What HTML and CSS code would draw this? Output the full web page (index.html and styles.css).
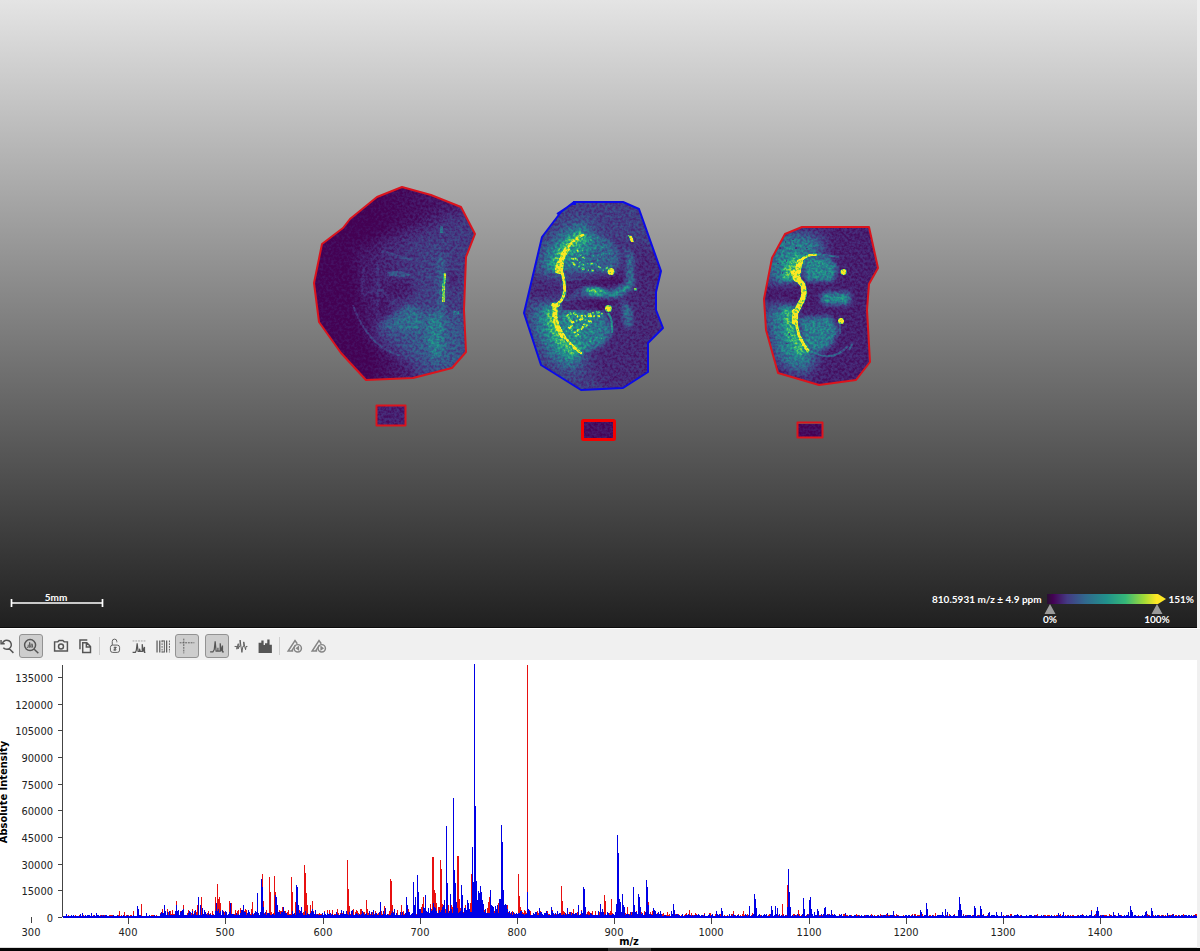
FILE: index.html
```html
<!DOCTYPE html>
<html lang="en">
<head>
<meta charset="utf-8">
<title>Imaging viewer</title>
<link rel="stylesheet" href="styles.css">
</head>
<body>
<main class="app">
<section class="viewport" aria-label="Ion image">
<svg class="scene" viewBox="0 0 1197 627" preserveAspectRatio="xMidYMid meet">
<defs>
<filter id="viridis" x="0" y="0" width="1" height="1" color-interpolation-filters="sRGB">
<feTurbulence type="fractalNoise" baseFrequency="0.38" numOctaves="2" seed="7" result="t"/>
<feColorMatrix in="t" values="2.4 0 0 0 -0.7  2.4 0 0 0 -0.7  2.4 0 0 0 -0.7  0 0 0 0 1" result="n"/>
<feComposite in="SourceGraphic" in2="n" operator="arithmetic" k1="0.55" k2="0.75" k3="0.06" k4="-0.025"/>
<feComponentTransfer>
<feFuncR type="table" tableValues=".267 .278 .231 .173 .129 .157 .369 .678 .992"/>
<feFuncG type="table" tableValues=".004 .176 .322 .447 .569 .682 .788 .863 .906"/>
<feFuncB type="table" tableValues=".329 .482 .545 .557 .549 .502 .384 .188 .145"/>
</feComponentTransfer>
</filter>
<filter id="b1" x="-1" y="-1" width="3" height="3"><feGaussianBlur stdDeviation="0.7"/></filter>
<filter id="b3" x="-1" y="-1" width="3" height="3"><feGaussianBlur stdDeviation="2.5"/></filter>
<filter id="b8" x="-1" y="-1" width="3" height="3"><feGaussianBlur stdDeviation="7"/></filter>
<linearGradient id="fadeR"><stop offset=".35" stop-color="#fff" stop-opacity="0"/><stop offset=".8" stop-color="#fff" stop-opacity=".15"/><stop offset="1" stop-color="#fff" stop-opacity=".15"/></linearGradient>
<clipPath id="c1"><path d="M402 187L431 195 461 207 475 234 466 257 464 310 466 352 452 368 413 378 366 380 341 353 319 322 314 283 322 244 343 228 350 219 377 197Z"/></clipPath>
<clipPath id="c2"><path d="M573 202H623L639 209 661 271 656 292V310L663 328 648 343V372L623 388 581 390 541 365 524 313 542 237 561 212Z"/></clipPath>
<clipPath id="c3"><path d="M802 227H869L878 268 869 284 867 310 870 362 856 380 819 385 778 373 766 330 764 299 772 258 785 234Z"/></clipPath>
</defs>

<g clip-path="url(#c1)"><g filter="url(#viridis)">
<rect x="310" y="183" width="170" height="200" fill="#020202"/>
<rect x="310" y="183" width="170" height="200" fill="url(#fadeR)"/>
<path d="M350 180H470L470 210 420 225 370 240Z" fill="#000" opacity=".6" filter="url(#b8)"/>
<g fill="#fff">
<path d="M355 250Q400 225 440 240V350Q400 370 365 335Z" opacity=".06" filter="url(#b8)"/>
<path d="M372 335L412 305 432 318 466 312V378H425L400 350Z" opacity=".12" filter="url(#b8)"/>
<path d="M375 326L411 303 425 318 420 330 390 330Z" opacity=".13" filter="url(#b3)"/>
<path d="M428 312H444V352L434 362 427 345Z" opacity=".16" filter="url(#b3)"/>
<path d="M438 255H445V312H438Z" opacity=".14" filter="url(#b3)"/>
<path d="M387 272L400 271 411 275 405 277 387 276Z" opacity=".14" filter="url(#b1)"/>
<path d="M382 250L412 259 411 262 381 253Z" opacity=".07" filter="url(#b1)"/>
<path d="M440 225L443 227V233H440Z" opacity=".22" filter="url(#b1)"/>
<path d="M454 311H459V315H453Z" opacity=".2" filter="url(#b1)"/>
<path d="M443.500 273H446V283H445V302H442V283H443.500Z" opacity=".72"/>
</g>
<g fill="none" stroke="#fff" filter="url(#b1)">
<path d="M353 305Q368 348 402 356" stroke-width="2" opacity=".12"/>
<path d="M363 268V295Q382 284 387 296M378 264V315M387 307L400 298" stroke-width="3" opacity=".05"/>
</g>
<path d="M384 282L408 280 416 291 400 300 386 294ZM378 297L390 300 388 315 377 314ZM448 272L459 275 458 287 448 285Z" fill="#000" opacity=".4" filter="url(#b3)"/>
</g></g>

<g clip-path="url(#c2)"><g filter="url(#viridis)">
<rect x="520" y="198" width="148" height="196" fill="#2c2c2c"/>
<path d="M590 240L665 250V392H600L590 365Z" fill="#000" opacity=".4" filter="url(#b8)"/>
<g fill="none" stroke="#fff">
<path d="M590 234Q562 238 550 271M546 307Q546 345 579 360" stroke-width="22" opacity=".35" filter="url(#b8)"/>
<path d="M584 235Q562 243 555 269M550 308Q551 338 576 354" stroke-width="9" opacity=".4" filter="url(#b3)"/>
</g>
<path d="M526 277L559 279 561 297 530 302Z" fill="#000" opacity=".35" filter="url(#b3)"/>
<g fill="#fff">
<path d="M566 262Q570 239 595 235 616 238 622 262L610 274 566 270Z" opacity=".2" filter="url(#b3)"/>
<path d="M560 311L603 312 613 330 603 346 580 353Q563 340 560 311Z" opacity=".28" filter="url(#b3)"/>
<path d="M583 291Q592 284 608 292 625 290 633 276L633 284Q624 300 602 296Z" opacity=".48" filter="url(#b3)"/>
<path d="M584 290Q594 288 605 292 598 296 587 293Z" opacity=".7" filter="url(#b3)"/>
<path d="M627 254H633V279H627ZM622 246L630 252 627 255ZM622 300L632 310 631 329 625 325Z" opacity=".3" filter="url(#b3)"/>
</g>
<path d="M567 281L605 279 619 275 624 282 603 287 580 286 567 298ZM562 302Q585 297 614 301L610 310H562Z" fill="#000" opacity=".45" filter="url(#b1)"/>
<g fill="none" stroke="#fff">
<path d="M571 259L580 260M573 264L580 267 586 269M577 250L580 254 586 260M572 262L576 265M575 258L583 265 594 263 603 270 611 266M582 269L596 271" stroke-width="2" stroke-dasharray="3 3 1 2" opacity=".6"/>
<path d="M566 317L573 312 580 319 588 315 597 312 604 315M571 323L582 319 592 322 575 332 569 327M576 337L586 322M568 315L572 325 566 331M579 316H600" stroke-width="2.500" stroke-dasharray="4 1 2 2" opacity=".7"/>
<path d="M578 243L598 238M582 251L613 245M593 256L612 253M595 264L606 250M580 337L602 327M578 345L604 338M594 330L599 343" stroke-width="2" stroke-dasharray="1 3 2 2" opacity=".22"/>
<path d="M608 313Q613 319 612 333" stroke-width="2" opacity=".35" filter="url(#b1)"/>
</g>
<g fill="none" stroke="#fff" stroke-linecap="round">
<path d="M583 235Q566 244 561 260" stroke-width="2.500"/>
<path d="M567 249Q560 260 559 269" stroke-width="5"/>
<path d="M560 265L559 270" stroke-width="8"/>
<path d="M562 272Q568 294 560 302L555 306" stroke-width="3"/>
<path d="M555 305V316Q556 327 563 336" stroke-width="5"/>
<path d="M553 305H558" stroke-width="4"/>
<path d="M560 331Q570 345 581 353" stroke-width="2.500"/>
</g>
<g fill="#fff"><circle cx="611" cy="271.500" r="3.500"/><circle cx="608.500" cy="308.500" r="3.500"/><path d="M628 235L632 236 634 242 631 242Z"/><rect x="634" y="288" width="2.500" height="2.500"/></g>
</g></g>

<g clip-path="url(#c3)"><g filter="url(#viridis)">
<rect x="760" y="223" width="122" height="166" fill="#141414"/>
<g fill="#fff">
<path d="M775 240L790 232 825 240 818 256 800 260 795 281H765ZM765 307H792V335L818 355 805 375 777 360Z" opacity=".36" filter="url(#b8)"/>
<path d="M786 262L802 252 797 280 780 281ZM782 306L796 308 796 330 808 351 798 356 786 335Z" opacity=".45" filter="url(#b3)"/>
<path d="M804 260L828 257 837 266 834 281 806 281Z" opacity=".38" filter="url(#b3)"/>
<path d="M799 318L830 316 838 330 832 345 818 352 806 344Z" opacity=".34" filter="url(#b3)"/>
<path d="M822 293L850 293V304H822Z" opacity=".42" filter="url(#b3)"/>
</g>
<path d="M764 287L796 286 799 301 766 303Z" fill="#000" opacity=".2" filter="url(#b3)"/>
<g fill="none" stroke="#fff" filter="url(#b1)">
<path d="M808 349Q830 365 848 346" stroke-width="2" opacity=".2"/>
<path d="M816 254L839 257M849 350L853 343M840 321V334" stroke-width="2" opacity=".2"/>
</g>
<g fill="none" stroke="#fff" stroke-linecap="round">
<path d="M816 254.500Q804 255 800 262" stroke-width="2.500"/>
<path d="M800 262Q798 268 797 276" stroke-width="6"/>
<path d="M796 277L803 285Q806 296 800 304L796 312" stroke-width="5.500"/>
<path d="M795 273L797 278" stroke-width="8"/>
<path d="M795 312V322" stroke-width="6"/>
<path d="M796 322Q798 338 808 351" stroke-width="3"/>
</g>
<g fill="#fff"><circle cx="843.500" cy="272" r="3"/><circle cx="841" cy="321" r="3"/></g>
<path d="M772 253h2v2h-2zM779 247h2v2h-2zM786 260h1v2h-1zM777 263h2v1h-2zM795 247h2v2h-2zM785 241h1v2h-1zM806 248h2v1h-2zM782 272h1v2h-1zM789 333h1v2h-1zM786 343h2v1h-2zM792 239h2v1h-2z" fill="#000" opacity=".6"/>
</g></g>

<g filter="url(#viridis)"><rect x="377" y="406" width="28" height="19" fill="#151515"/></g>
<g filter="url(#viridis)"><rect x="583" y="421" width="32" height="18" fill="#0a0a0a"/></g>
<g filter="url(#viridis)"><rect x="798" y="424" width="24" height="14" fill="#060606"/></g>

<g fill="none" stroke="#db141d" stroke-width="2" stroke-linejoin="round">
<path d="M402 187L431 195 461 207 475 234 466 257 464 310 466 352 452 368 413 378 366 380 341 353 319 322 314 283 322 244 343 228 350 219 377 197Z"/>
<path d="M802 227H869L878 268 869 284 867 310 870 362 856 380 819 385 778 373 766 330 764 299 772 258 785 234Z"/>
<rect x="376.500" y="405.500" width="29" height="20"/>
<rect x="797.500" y="422.500" width="25" height="15"/>
<rect x="582.500" y="420.500" width="32" height="19" rx="1" stroke="#f40000" stroke-width="3"/>
<path d="M557 214L572 204 576 204M573 202H623L639 209 661 271 656 292V310L663 328 648 343V372L623 388 581 390 541 365 524 313 542 237 561 212 574 202" stroke="#0b0be8" stroke-width="2"/>
</g>
</svg>
<div class="overlay">
<svg class="scale" viewBox="0 0 96 16" role="img" aria-label="Scale bar 5mm">
<path d="M1.500 8V16M92.500 8V16M1.500 12H92.500" stroke="#fff" stroke-width="1.700" fill="none"/>
<text x="46" y="10" text-anchor="middle">5mm</text>
</svg>
<svg class="legend" viewBox="0 0 264 34" role="img" aria-label="Colour scale">
<defs><linearGradient id="ramp"><stop offset="0" stop-color="#281032"/><stop offset=".05" stop-color="#440154"/><stop offset=".17" stop-color="#443a83"/><stop offset=".32" stop-color="#31688e"/><stop offset=".5" stop-color="#21918c"/><stop offset=".66" stop-color="#35b779"/><stop offset=".82" stop-color="#a5db36"/><stop offset=".92" stop-color="#fde725"/></linearGradient></defs>
<text x="2" y="14">810.5931 m/z ± 4.9 ppm</text>
<path d="M117 5H228L236 10 228 15H117Z" fill="url(#ramp)"/>
<path d="M120 15L125.500 25H114.500ZM227 15L232.500 25H221.500Z" fill="#9b9b9b"/>
<text x="264" y="14" text-anchor="end">151%</text>
<text x="120" y="34" text-anchor="middle">0%</text>
<text x="227" y="34" text-anchor="middle">100%</text>
</svg>
</div>
</section>

<nav class="toolbar" aria-label="Spectrum tools">
<div class="group">
<button aria-label="Reset zoom"><svg viewBox="0 0 24 24"><path d="M7 9A5 5 0 1 1 8 14M14.500 15L19 19.500M5.500 5.500V9.500H9.500"/></svg></button>
<button class="on" aria-label="Zoom spectrum"><svg viewBox="0 0 24 24"><circle cx="11" cy="11" r="6"/><path d="M15.500 15.500L20 20"/><path class="thin" d="M7.500 13.500H9V10.500M10.500 14V8L11.500 13.500M13 14V9.500L14 13.500"/></svg></button>
</div>
<div class="group">
<button aria-label="Take picture"><svg viewBox="0 0 24 24"><path d="M5 7.500H8.500L10 6H14L15.500 7.500H19V17.500H5Z"/><circle cx="12" cy="12.500" r="2.700"/></svg></button>
<button aria-label="Copy"><svg viewBox="0 0 24 24"><path d="M9.500 8.500H14L18 12.500V19H9.500ZM13.500 9V13H17.500M6.500 15.500V5.500H14.500"/></svg></button>
</div>
<div class="group ruled">
<button aria-label="Unlock"><svg viewBox="0 0 24 24"><rect class="thin" x="7" y="11" width="10" height="8" rx="2.500"/><path class="thin" d="M9 11V7Q9 4.500 11.500 4.500T14 7V8"/><path class="thin" d="M12 12.500V17.500M10.500 14L13.500 13.500 10.500 16.500 13.500 16"/></svg></button>
<button aria-label="Peaks"><svg viewBox="0 0 24 24"><path class="mid" d="M5 19H8L9 17 10 9 11 18H12.500V15L13.500 18H15.500V10L16.500 18 18 13V19H19"/><path class="faint" d="M5 6.500H19"/></svg></button>
<button aria-label="Bins"><svg viewBox="0 0 24 24"><path class="mid" d="M5.500 6V19M8.500 6V19M16 6V19"/><path class="fine" d="M19 6V19M11 6V19"/><path class="thin" d="M13.500 6V19M10.500 6.500H13.500M10.500 18.500H13.500"/></svg></button>
<button class="on" aria-label="Crosshair"><svg viewBox="0 0 24 24"><path class="fine" d="M8.500 4V20M4 8.500H20"/></svg></button>
</div>
<div class="group">
<button class="on" aria-label="Line spectrum"><svg viewBox="0 0 24 24"><path class="mid" d="M4.500 18.500H7.500L9 16 10 7 11 17.500H13V14 17.500H15.500V9L16.500 17.500 18 11.500V18.500H19.500"/></svg></button>
<button aria-label="Mirror spectrum"><svg viewBox="0 0 24 24"><path class="thin" d="M5 12.500H7.500V15.500L9 9.500V15L10 12.500H11V5.500L12 12.500 13 19 14 12.500H15V7.500L16 12.500 17 16 17.500 12.500H19"/></svg></button>
<button aria-label="Histogram"><svg viewBox="0 0 24 24"><path class="solid" d="M5 19.500V8.500H8V6H10.500V11H12V9H14.500V5H17V10.500H19.500V19.500Z"/></svg></button>
</div>
<div class="group ruled">
<button class="dim" aria-label="Previous peak"><svg viewBox="0 0 24 24"><path d="M10 17.500H4.500L12 6 14.500 9.500M8.500 17L12.500 11"/><circle cx="15" cy="14.500" r="4"/><path class="solid" d="M16.500 11.500V17.500L12.500 14.500Z"/></svg></button>
<button class="dim" aria-label="Next peak"><svg viewBox="0 0 24 24"><path d="M10 17.500H4.500L12 6 14.500 9.500M8.500 17L12.500 11"/><circle cx="15" cy="14.500" r="4"/><path class="solid" d="M13.500 11.500V17.500L17.500 14.500Z"/></svg></button>
</div>
</nav>

<section class="chart" aria-label="Spectrum">
<svg id="spectrum" viewBox="0 0 1197 287"></svg>
</section>
<footer class="dock"><span class="grip"></span></footer>
</main>
<script src="chart.js"></script>
</body>
</html>
```
FILE: styles.css
```css
* { box-sizing: border-box; }
body { margin: 0; background: #f0f0f0; font-family: "DejaVu Sans Condensed", "DejaVu Sans", sans-serif; }
.app { display: flex; flex-direction: column; }
.viewport { position: relative; margin-right: 3px; background: linear-gradient(#e4e4e4, #202020); border-bottom: 1px solid #0c0c0c; }
.scene, .chart svg { display: block; width: 100%; height: auto; }
.overlay { position: absolute; left: 10px; right: 3px; bottom: 4px; display: flex; justify-content: space-between; align-items: flex-start; }
.overlay svg { display: block; overflow: visible; }
.overlay text { font: 700 10px Lato, sans-serif; fill: #fff; }
.scale { width: 96px; height: 16px; margin-top: 2px; }
.legend { width: 264px; height: 34px; }
.toolbar { display: flex; align-items: center; gap: 6px; height: 32px; padding-top: 3px; margin-left: -5px; border-top: 1px solid #fff; background: #f0f0f0; }
.group { position: relative; display: flex; }
.ruled::before { content: ""; position: absolute; left: -4px; top: 3px; bottom: 3px; width: 1px; background: #cfcfcf; }
.toolbar button { width: 24px; height: 24px; padding: 0; border: 1px solid transparent; border-radius: 3px; background: none; color: #555; }
.toolbar .on { background: #cdcdcd; border-color: #929292; }
.toolbar .dim { color: #858585; }
.toolbar svg { display: block; width: 22px; height: 22px; fill: none; stroke: currentColor; stroke-width: 1.6; }
.toolbar .mid { stroke-width: 1.3; }
.toolbar .thin { stroke-width: 1; }
.toolbar .fine { stroke-width: 1; stroke-dasharray: 2 1; }
.toolbar .faint { stroke-width: 1; stroke-dasharray: 2 1; opacity: .5; }
.toolbar .solid { fill: currentColor; stroke: none; }
.chart { margin-right: 3px; background: #fff; border-bottom: 1px solid #ddd; }
.chart text { font-size: 11px; fill: #222; }
.chart .title { font-weight: 700; fill: #000; }
.chart path { fill: none; stroke-width: 1; shape-rendering: crispEdges; }
.chart .axis { stroke: #444; }
.chart .red { stroke: #e81010; }
.chart .blue { stroke: #0000e6; }
.chart .base { stroke: #0000e6; stroke-width: 2; }
.dock { display: flex; justify-content: center; height: 4px; background: #050505; }
.grip { width: 43px; margin-left: 59px; background: #333; }
```
FILE: chart.js
```js
// Peaks as [position, height] pairs in chart units.
const red = [119,6,124,5,133,6,141,13,176,16,183,12,188,7,201,20,197,12,215,20,217,33,218,18,219,20,220,14,229,16,231,14,235,7,238,7,240,9,252,15,262,43,263,16,269,40,270,25,274,41,275,25,282,10,291,40,292,25,295,15,304,52,305,44,306,24,307,12,310,12,312,16,347,57,348,28,349,11,366,17,360,8,390,38,391,36,392,12,401,12,406,16,384,11,423,20,432,60,433,60,434,27,435,24,440,57,441,48,442,13,457,61,458,61,459,18,471,43,472,20,488,15,489,20,497,10,518,43,519,21,520,10,521,7,527,252,561,31,562,16,563,6,573,8,604,22,605,16,611,18,622,15,627,10,646,16,648,15,667,5,689,7,691,4,733,6,743,6,782,13,787,32,788,9,798,7,880,3,935,4,954,3,1091,7,1124,2];
const blue = [66,3,80,3,82,4,91,4,96,4,137,11,138,8,146,4,164,12,165,6,176,12,177,6,183,8,198,20,200,12,202,9,204,7,216,14,218,8,230,14,243,12,257,24,261,38,262,30,263,10,275,22,276,20,277,12,283,10,296,32,297,30,298,12,301,10,312,8,380,15,385,9,394,8,406,20,407,12,413,35,414,12,415,20,417,42,418,25,419,8,425,22,433,14,446,91,447,34,444,17,450,23,453,119,454,47,455,34,456,15,461,32,462,22,467,17,468,14,472,70,473,35,474,253,475,111,476,36,477,17,478,26,479,24,480,31,481,25,482,17,483,13,490,27,491,12,492,11,499,18,500,18,501,92,502,75,503,27,504,12,505,13,506,12,507,8,527,25,528,8,539,9,551,10,567,9,578,12,583,30,584,28,585,10,600,13,602,8,616,13,617,82,618,64,619,18,620,15,622,23,623,12,624,10,633,30,634,12,638,23,639,20,640,10,646,37,647,30,648,12,653,9,654,7,660,6,671,6,673,13,674,7,716,6,721,9,722,6,749,11,754,23,755,18,756,9,771,11,772,7,775,11,777,9,787,10,788,48,789,25,790,10,803,19,804,8,809,17,810,20,811,8,814,5,817,8,818,6,824,9,825,10,831,7,845,4,887,4,893,6,920,7,921,5,926,14,927,8,942,5,945,8,947,5,958,7,959,20,960,13,961,7,974,11,975,9,980,11,981,8,988,4,989,5,996,5,1001,5,1017,3,1058,4,1063,5,1091,6,1096,6,1097,10,1098,6,1113,5,1118,4,1128,5,1130,11,1131,7,1132,5,1145,5,1146,6,1151,9,1152,6,1167,4,1173,3,1194,2];
const base = 257;
let seed = 11;
const rnd = () => (seed = (seed * 16807) % 2147483647) / 2147483647;
const bars = list => {
  let d = "";
  for (let i = 0; i < list.length; i += 2) d += `M${list[i] + 0.5} ${base}v${-list[i + 1]}`;
  return d;
};
// Chemical background between the listed peaks.
const floor = extra => {
  let d = "";
  for (let x = 64; x < 1197; x++) {
    const level = x < 160 ? 1 : x < 420 ? 5 : x < 510 ? 8 : x < 660 ? 4 : x < 850 ? 2.5 : 1.4;
    const lift = x < 160 ? 1 : x < 420 ? 2 : x < 510 ? 4 : x < 660 ? 2 : 1;
    d += `M${x + 0.5} ${base}v${-Math.round(lift + Math.pow(rnd(), 2.2) * level * extra)}`;
  }
  return d;
};
let axis = "M62.500 5V257", labels = "";
for (let i = 0; i < 10; i++) {
  const y = Math.round(base - i * 26.65);
  axis += `M58 ${y + 0.5}H62`;
  labels += `<text x="53" y="${y + 5}" text-anchor="end">${i * 15000}</text>`;
}
for (let i = 0; i < 12; i++) {
  const x = Math.round(31 + i * 97.2);
  axis += i ? `M${x + 0.5} 258V264` : `M${x + 0.5} 257V263`;
  labels += `<text x="${x}" y="276" text-anchor="middle">${300 + i * 100}</text>`;
}
document.getElementById("spectrum").innerHTML =
  `<path class="axis" d="${axis}"/>` +
  `<path class="red" d="${floor(1.3)}${bars(red)}"/><path class="blue" d="${floor(1)}${bars(blue)}"/><path class="base" d="M63 257H1197"/>${labels}` +
  `<text class="title" x="629" y="285" text-anchor="middle">m/z</text>` +
  `<text class="title" transform="translate(7 132) rotate(-90)" text-anchor="middle">Absolute Intensity</text>`;
```
